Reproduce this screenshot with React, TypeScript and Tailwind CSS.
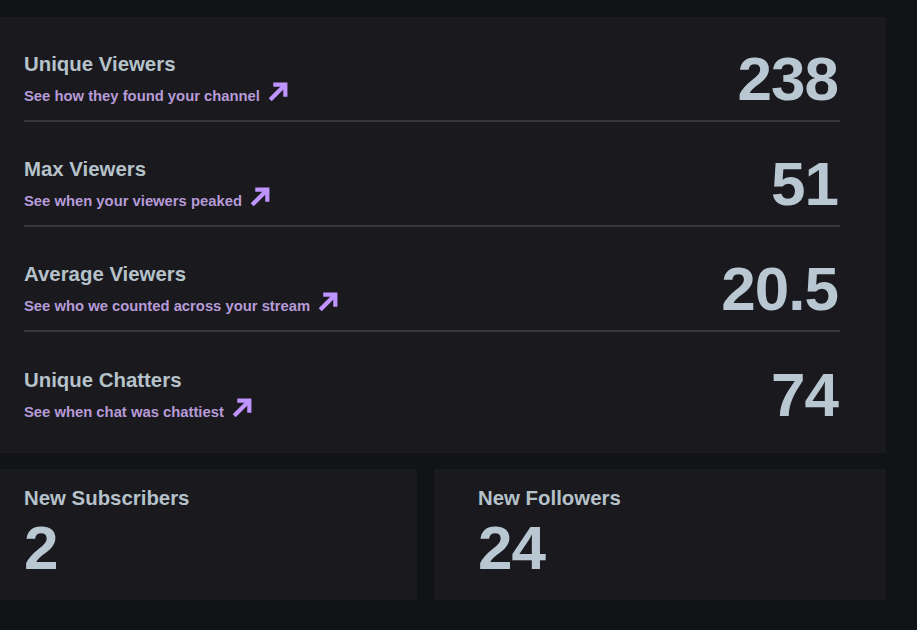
import { useMemo } from 'react';

type StatRow = {
  label: string;
  hint: string;
  value: string;
};

const rows: StatRow[] = [
  { label: 'Unique Viewers', hint: 'See how they found your channel', value: '238' },
  { label: 'Max Viewers', hint: 'See when your viewers peaked', value: '51' },
  { label: 'Average Viewers', hint: 'See who we counted across your stream', value: '20.5' },
  { label: 'Unique Chatters', hint: 'See when chat was chattiest', value: '74' }
];

const ArrowOut = () => (
  <svg
    viewBox="0 0 20 20"
    className="h-[21px] w-[21px] shrink-0 text-[#bf94ff]"
    fill="none"
    stroke="currentColor"
    strokeWidth={4}
    strokeLinecap="square"
    strokeLinejoin="miter"
  >
    <path d="M3.5 16.5 L15 5" />
    <path d="M7 3.5 H16.5 V13" />
  </svg>
);

const Row = ({ row, last }: { row: StatRow; last: boolean }) => (
  <div
    className={
      last
        ? 'flex h-[105px] items-center justify-between pt-[21px]'
        : 'flex h-[105px] items-center justify-between border-b-2 border-[#36363c] pt-[21px]'
    }
  >
    <div className="flex flex-col">
      <span className="text-[20.4px] font-bold leading-[24px] text-[#b5c2ca]">{row.label}</span>
      <span className="mt-[10px] flex items-center gap-[8px] text-[14.8px] font-bold leading-[20px] text-[#b69bd8]">
        {row.hint}
        <span className="-mt-[10px]">
          <ArrowOut />
        </span>
      </span>
    </div>
    <span className="pr-[2px] text-[62px] font-bold leading-none tracking-[-1px] text-[#b8c7d1]">{row.value}</span>
  </div>
);

const SmallCard = ({ label, value, className }: { label: string; value: string; className: string }) => (
  <div className={`flex h-[131px] flex-col bg-[#1a191e] pt-[17px] ${className}`}>
    <span className="text-[20.4px] font-bold leading-[24px] text-[#b5c2ca]">{label}</span>
    <span className="mt-[7px] text-[62px] font-bold leading-none tracking-[-1px] text-[#b8c7d1]">{value}</span>
  </div>
);

export default function App() {
  const list = useMemo(() => rows, []);
  return (
    <div
      className="h-[630px] w-[917px] overflow-hidden bg-[#111417] pt-[17px]"
      style={{ fontFamily: '"Liberation Sans", Arial, sans-serif' }}
    >
      <div className="w-[886px] bg-[#1a191e] pb-[16px] pl-[24px] pr-[46px]">
        {list.map((row, i) => (
          <Row key={row.label} row={row} last={i === list.length - 1} />
        ))}
      </div>
      <div className="mt-[16px] flex w-[886px] gap-[17px]">
        <SmallCard label="New Subscribers" value="2" className="w-[417px] pl-[24px]" />
        <SmallCard label="New Followers" value="24" className="flex-1 pl-[44px]" />
      </div>
    </div>
  );
}
